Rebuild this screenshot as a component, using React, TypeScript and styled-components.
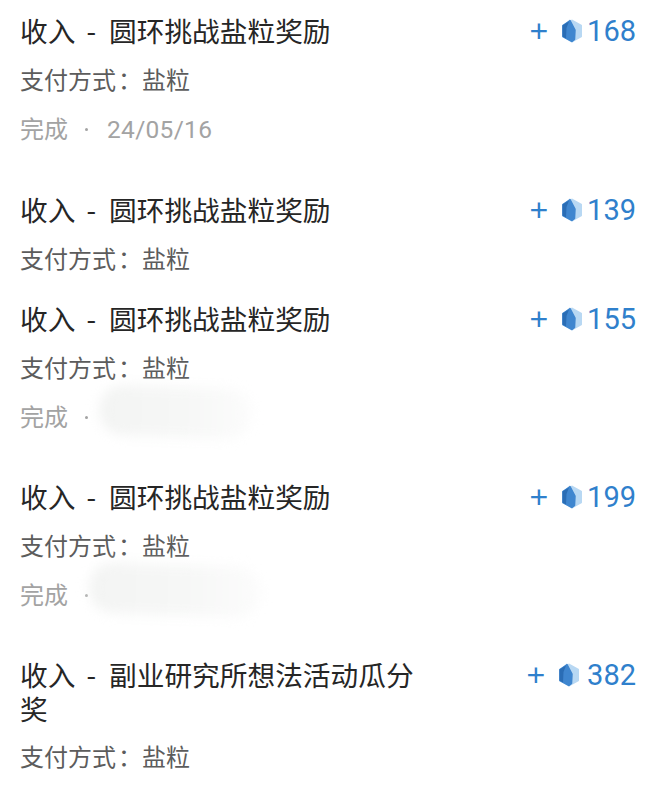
import React from 'react';
import styled, { createGlobalStyle } from 'styled-components';

interface Txn {
  title: string;
  amount: number;
  gemGap?: number;
  status?: boolean;
  date?: string;
  smudge?: { left: number; width: number };
  bottom: number;
}

const GlobalStyle = createGlobalStyle`
  html, body {
    margin: 0;
    padding: 0;
    background: #fff;
    font-family: "Noto Sans CJK SC", "Liberation Sans", sans-serif;
  }
`;

const List = styled.div`
  width: 660px;
  height: 792px;
  overflow: hidden;
  box-sizing: border-box;
  padding: 13px 24px 0 20px;
`;

const Item = styled.div<{ $bottom: number }>`
  margin-bottom: ${props => props.$bottom}px;
`;

const TitleRow = styled.div`
  display: flex;
  justify-content: space-between;
  align-items: flex-start;
`;

const Title = styled.div`
  width: 400px;
  font-size: 27.7px;
  line-height: 34px;
  color: #262626;
`;

const Dash = styled.span`
  margin: 0 13px 0 11px;
`;

const Amount = styled.div`
  display: flex;
  align-items: center;
  height: 34px;
  margin-top: 1px;
  color: #2f80cc;
`;

const Plus = styled.span`
  font-family: "Liberation Sans", sans-serif;
  font-size: 32px;
  line-height: 34px;
  margin-right: 13px;
`;

const Value = styled.span<{ $gap: number }>`
  font-family: Roboto, "Liberation Sans", sans-serif;
  font-size: 29px;
  line-height: 34px;
  margin-left: ${props => props.$gap}px;
`;

const Sub = styled.div`
  margin-top: 14px;
  height: 36px;
  font-size: 24px;
  line-height: 34px;
  color: #5c5c5c;
`;

const Colon = styled.span`
  display: inline-block;
  width: 26px;
  padding-left: 2px;
  box-sizing: border-box;
`;

const Status = styled.div`
  display: flex;
  align-items: center;
  margin-top: 14px;
  height: 34px;
  font-size: 24px;
  color: #a3a3a3;
`;

const StatusLabel = styled.span`
  margin-top: -4px;
`;

const Dot = styled.span`
  width: 3px;
  height: 3px;
  border-radius: 50%;
  background: #a3a3a3;
  margin: 0 19px 0 17px;
`;

const DateText = styled.span`
  font-family: Roboto, "Liberation Sans", sans-serif;
  font-size: 24.5px;
  letter-spacing: 0.3px;
`;

const Smudge = styled.div<{ $left: number; $width: number }>`
  width: ${props => props.$width}px;
  height: 50px;
  margin: -17px 0 -7px ${props => props.$left}px;
  border-radius: 24px;
  background: linear-gradient(90deg, #f3f4f3, #f6f7f6 55%, #fcfcfc);
  filter: blur(6px);
  transform: rotate(2deg);
`;

const Gem = () => (
  <svg width="22" height="24" viewBox="0 0 22 24">
    <path d="M11 1.5 L20 6.5 V17.5 L11 22.5 L2 17.5 V6.5 Z" fill="#b8d8f3" stroke="#b8d8f3" strokeWidth="2" strokeLinejoin="round" />
    <path d="M9 1.5 L2 6.5 V17.5 L11 22.5 L13.5 20.5 L14 11 Z" fill="#3f86cf" stroke="#3f86cf" strokeWidth="1.5" strokeLinejoin="round" />
    <path d="M8 2.5 L1.5 6.5 V17.5 L5 19.5 L5.5 9 Z" fill="#2a6db5" />
  </svg>
);

const txns: Txn[] = [
  { title: '圆环挑战盐粒奖励', amount: 168, status: true, date: '24/05/16', bottom: 46 },
  { title: '圆环挑战盐粒奖励', amount: 139, bottom: 24 },
  { title: '圆环挑战盐粒奖励', amount: 155, status: true, smudge: { left: -8, width: 153 }, bottom: 45 },
  { title: '圆环挑战盐粒奖励', amount: 199, status: true, smudge: { left: -18, width: 172 }, bottom: 45 },
  { title: '副业研究所想法活动瓜分奖', amount: 382, gemGap: 7, bottom: 0 },
];

export default function App() {
  return (
    <>
      <GlobalStyle />
      <List>
        {txns.map((t, i) => (
          <Item key={i} $bottom={t.bottom}>
            <TitleRow>
              <Title>收入<Dash>-</Dash>{t.title}</Title>
              <Amount>
                <Plus>+</Plus>
                <Gem />
                <Value $gap={t.gemGap ?? 4}>{t.amount}</Value>
              </Amount>
            </TitleRow>
            <Sub>支付方式<Colon>：</Colon>盐粒</Sub>
            {t.status && (
              <Status>
                <StatusLabel>完成</StatusLabel>
                <Dot />
                {t.date && <DateText>{t.date}</DateText>}
                {t.smudge && <Smudge $left={t.smudge.left} $width={t.smudge.width} />}
              </Status>
            )}
          </Item>
        ))}
      </List>
    </>
  );
}
